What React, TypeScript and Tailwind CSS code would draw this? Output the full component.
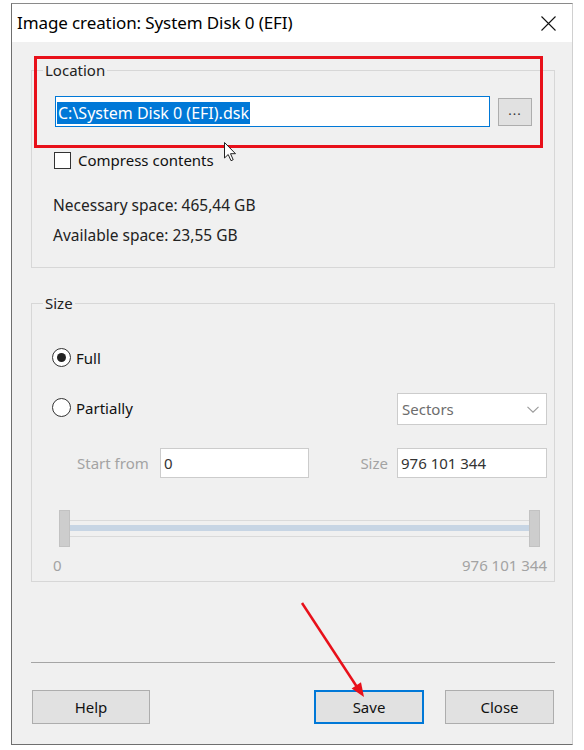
import React from "react";

const font = { fontFamily: '"Noto Sans", "Open Sans", sans-serif' };

function GroupBox({
  label,
  className,
  children,
}: {
  label: string;
  className: string;
  children: React.ReactNode;
}) {
  return (
    <div className={`relative border border-[#d7d7d7] ${className}`}>
      <span className="absolute left-[11px] top-[-11px] bg-[#f0f0f0] px-[2px] text-[15px] leading-[20px] text-[#222]">
        {label}
      </span>
      {children}
    </div>
  );
}

function Radio({ checked, label }: { checked?: boolean; label: string }) {
  return (
    <div className="flex h-[19px] items-center gap-[5px]">
      <span className="flex h-[19px] w-[19px] items-center justify-center rounded-full border border-[#333] bg-white">
        {checked && <span className="h-[9px] w-[9px] rounded-full bg-[#222]" />}
      </span>
      <span className="text-[15px] leading-[20px] text-[#111]">{label}</span>
    </div>
  );
}

function Button({ label, primary, className }: { label: string; primary?: boolean; className: string }) {
  return (
    <div
      className={`flex h-[34px] items-center justify-center bg-[#e1e1e1] text-[15px] text-[#111] ${
        primary ? "border-2 border-[#0078d7]" : "border border-[#adadad]"
      } ${className}`}
    >
      {label}
    </div>
  );
}

export default function App() {
  return (
    <div className="relative h-[750px] w-[584px] overflow-hidden bg-white pl-[11px] pt-[3px]" style={font}>
      <div className="flex h-[742px] w-[562px] flex-col border border-b-[#6f6f6f] border-l-[#6f6f6f] border-r-[#d0d0d0] border-t-[#8a8a8a]">
        {/* title bar */}
        <div className="flex h-[38px] items-center justify-between bg-white pl-[5px] pr-[16px]">
          <span className="text-[17px] tracking-[-0.1px] text-black">Image creation: System Disk 0 (EFI)</span>
          <svg width="15" height="15" viewBox="0 0 15 15">
            <path d="M0.5 0.5 L14.5 14.5 M14.5 0.5 L0.5 14.5" stroke="#111" strokeWidth="1.1" fill="none" />
          </svg>
        </div>

        {/* body */}
        <div className="flex flex-1 flex-col bg-[#f0f0f0] pl-[19px] pr-[17px] pt-[28px]">
          <GroupBox label="Location" className="h-[198px]">
            <div className="pl-[21px] pt-[25px]">
              <div className="flex items-center gap-[8px]">
                <div className="ml-[2px] flex h-[31px] w-[435px] items-center border border-[#0078d7] bg-white pl-[1px] pt-[3px]">
                  <span className="whitespace-nowrap bg-[#0078d7] px-[1px] text-[16px] leading-[22px] text-white">
                    C:\System Disk 0 (EFI).dsk
                  </span>
                </div>
                <div className="flex h-[28px] w-[34px] items-center justify-center border border-[#adadad] bg-[#e1e1e1] pb-[2px] text-[13px] leading-none tracking-[1px] text-[#333]">
                  ...
                </div>
              </div>
              <div className="ml-[1px] mt-[25px] flex items-center gap-[7px]">
                <span className="h-[17px] w-[17px] border border-[#333] bg-white" />
                <span className="text-[15px] leading-[17px] text-[#111]">Compress contents</span>
              </div>
              <div className="mt-[21px] text-[15.5px] leading-[30px] text-[#222]">
                <div>Necessary space: 465,44 GB</div>
                <div>Available space: 23,55 GB</div>
              </div>
            </div>
          </GroupBox>

          <GroupBox label="Size" className="mt-[35px] h-[279px]">
            <div className="pl-[20px] pr-[7px] pt-[44px]">
              <Radio checked label="Full" />
              <div className="mt-[26px] flex items-start justify-between">
                <div className="mt-[5px]">
                  <Radio label="Partially" />
                </div>
                <div className="flex h-[32px] w-[150px] items-center justify-between border border-[#cccccc] bg-white pl-[4px] pr-[7px]">
                  <span className="text-[15px] text-[#6d6d6d]">Sectors</span>
                  <svg width="12" height="7" viewBox="0 0 12 7">
                    <path d="M0.5 0.8 L6 6.2 L11.5 0.8" stroke="#9a9a9a" strokeWidth="1.1" fill="none" />
                  </svg>
                </div>
              </div>
              <div className="mt-[23px] flex h-[30px] items-center">
                <span className="w-[108px] flex-none whitespace-nowrap pl-[25px] text-[15px] text-[#a3a3a3]">
                  Start from
                </span>
                <div className="flex h-[30px] w-[149px] flex-none items-center border border-[#cccccc] bg-white pl-[3px] text-[15px] text-[#333]">
                  0
                </div>
                <div className="flex flex-1 justify-end pr-[9px] text-[15px] text-[#a3a3a3]">Size</div>
                <div className="flex h-[30px] w-[150px] flex-none items-center border border-[#cccccc] bg-white pl-[3px] text-[15px] text-[#333]">
                  976 101 344
                </div>
              </div>

              {/* slider */}
              <div className="ml-[7px] mr-[7px] mt-[32px] flex items-center">
                <span className="h-[37px] w-[11px] border border-[#c2c2c2] bg-[#cdcdcd]" />
                <div className="h-[17px] flex-1 border-b border-t border-[#dadada] pt-[4px]">
                  <div className="h-[6px] bg-[#c7d5e4]" />
                </div>
                <span className="h-[37px] w-[11px] border border-[#c2c2c2] bg-[#cdcdcd]" />
              </div>
              <div className="mt-[8px] flex justify-between text-[15px] leading-[20px] text-[#a3a3a3]">
                <span className="pl-[1px]">0</span>
                <span>976 101 344</span>
              </div>
            </div>
          </GroupBox>

          <div className="mt-[80px] h-[1px] bg-[#a5a5a5]" />

          <div className="ml-[1px] mr-[1px] mt-[27px] flex">
            <Button label="Help" className="w-[118px]" />
            <div className="flex-1" />
            <Button label="Save" primary className="w-[110px]" />
            <Button label="Close" className="ml-[21px] w-[109px]" />
          </div>
        </div>
      </div>

      {/* annotations */}
      <div className="absolute left-[34px] top-[56px] h-[92px] w-[509px] border-[3px] border-[#e8101a]" />
      <svg className="absolute left-[224px] top-[142px]" width="13" height="20" viewBox="0 0 13 20">
        <path d="M0.5 0.5 L0.5 16 L4.2 12.5 L7 18.7 L9.2 17.7 L6.5 11.7 L11.5 11.7 Z" fill="white" stroke="#222" strokeWidth="1" />
      </svg>
      <svg className="absolute left-0 top-0" width="584" height="750" viewBox="0 0 584 750">
        <line x1="302" y1="603" x2="357" y2="687" stroke="#e8101a" strokeWidth="2.5" />
        <polygon points="364,697 351.6,688.5 361,682.3" fill="#e8101a" />
      </svg>
    </div>
  );
}
